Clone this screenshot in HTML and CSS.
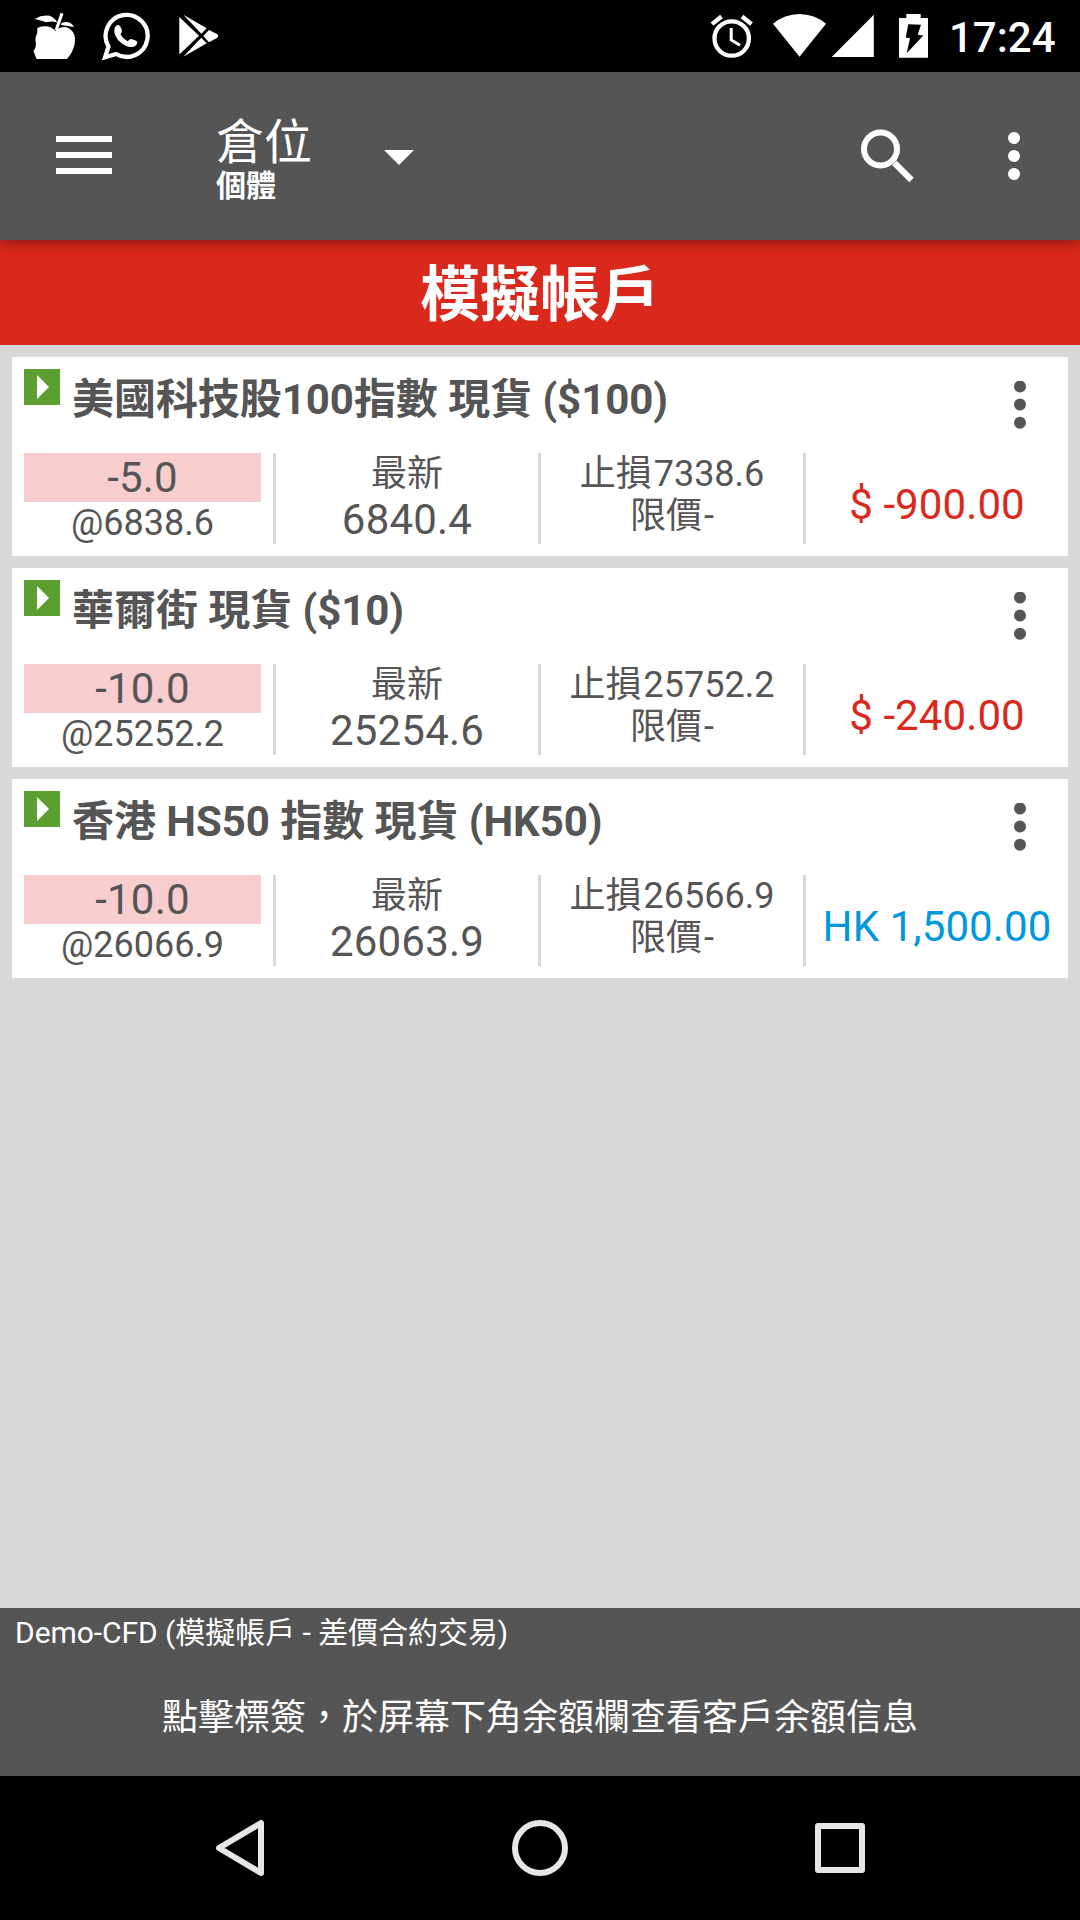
FILE: index.html
```html
<!DOCTYPE html>
<html lang="zh-Hant">
	<head>
		<meta charset="utf-8">
		<title>倉位</title>
		<link rel="stylesheet" href="styles.css">
	</head>
	<body>
		<div class="status">
			<svg width="48" height="48" viewBox="0 0 48 48" fill="#fff">
				<path d="M7.300 16Q11 14 15 14.300Q22 14.500 25.300 19Q29 15 35 15C41 16 45 21 45 27C45 35 42 41 37 47H6.500L3.500 39Q6 36 6 32Q5 28 5.700 25Q8 21 7.300 16Z"/>
				<path d="M4.700 7Q12 2.500 19.700 3.800Q25 6 27.300 10.500Q22 8.500 16.300 10.300Q11 8.500 4.700 7ZM30.500 .7L33.500 2L27.500 19L24.700 17.700ZM31.500 11Q40 8 44 15Q38 14 31 13Z"/>
			</svg>
			<svg width="48" height="48" viewBox="0 0 48 48">
				<path d="M3 45.300L6.500 34.500A21 21 0 1 1 14 42Z" fill="none" stroke="#fff" stroke-width="4.300"/>
				<path d="M12.300 18Q13 13 16.500 13Q18.500 13.500 20 18.500Q20 20 18.500 22.300Q20.500 26.500 25.500 29.300L28.500 27Q34 28 35.500 30Q35 34 31 35Q24 36 16.500 28.500Q12 23 12.300 18Z" fill="#fff"/>
			</svg>
			<svg width="48" height="48" viewBox="0 0 48 48" fill="#fff">
				<path d="M5.300 5V42.500L25 23.700ZM9.300 2.700L32.700 16.300L27.300 21.700ZM9.300 44.700L32.700 31.300L27.300 25.700ZM35 18L42.500 21.800Q46 23.800 42.500 26.200L35 30.300L29.300 24Z"/>
			</svg>
			<svg class="alarm" width="48" height="48" viewBox="0 0 48 48" fill="none" stroke="#fff">
				<circle cx="23.700" cy="26.500" r="17.200" stroke-width="4.300"/>
				<path d="M4 12.200L13.500 4.500M34 4.500L43.500 12.200" stroke-width="4.300"/>
				<path d="M23.200 16V28L32 33.300" stroke-width="3"/>
			</svg>
			<svg class="wifi" width="54" height="48" viewBox="0 0 54 48" fill="#fff">
				<path d="M0 11.700A41 41 0 0 1 53 11.700L26.500 44.700Z"/>
			</svg>
			<svg class="signal" width="43" height="48" viewBox="0 0 43 48" fill="#fff">
				<path d="M.7 44.900L42.800 2.700V44.900Z"/>
			</svg>
			<svg class="battery" width="29" height="48" viewBox="0 0 29 48" fill="#fff">
				<path fill-rule="evenodd" d="M0 6H7.300V2H21.700V6H29V45.700H0ZM9.300 12.300L22 12.700L18.700 22.700L24.300 23.500L7.700 41.300L11 26.300L6.700 25.500Z"/>
			</svg>
			<span class="time">17:24</span>
		</div>

		<div class="toolbar">
			<svg class="menu" width="56" height="38" viewBox="0 0 56 38" fill="#fff">
				<path d="M0 0H56V6H0ZM0 16H56V22H0ZM0 32H56V38H0Z"/>
			</svg>
			<div class="heading">
				<h1>倉位</h1>
				<h2>個體</h2>
			</div>
			<span class="caret"></span>
			<svg class="search" width="54" height="54" viewBox="0 0 54 54" fill="none" stroke="#fff" stroke-width="6">
				<circle cx="20.500" cy="20" r="16.500"/>
				<path d="M34.500 34L51.500 51" stroke-width="6.200"/>
				<path d="M34.200 36.500L36.500 34.200" stroke-width="3"/>
			</svg>
			<svg class="more" width="12" height="48" viewBox="0 0 12 48" fill="#fff">
				<circle cx="6" cy="6" r="6"/><circle cx="6" cy="24" r="6"/><circle cx="6" cy="42" r="6"/>
			</svg>
		</div>

		<div class="banner">模擬帳戶</div>

		<div class="list">
			<div class="card">
				<div class="top">
					<svg width="36" height="36" viewBox="0 0 36 36"><path fill="#5d9e31" d="M0 0H36V36H0Z"/><path fill="#fff" d="M13 6L25 18L13 30Z"/></svg>
					<h3>美國科技股100指數 現貨 ($100)</h3>
					<svg class="dots" width="12" height="49" viewBox="0 0 12 49"><circle cx="6" cy="5.500" r="6"/><circle cx="6" cy="23.600" r="6"/><circle cx="6" cy="41.800" r="6"/></svg>
				</div>
				<div class="cols">
					<div class="amount"><b>-5.0</b><i>@6838.6</i></div>
					<div class="last"><i>最新</i><b>6840.4</b></div>
					<div class="limit"><i>止損<span>7338.6</span></i><i>限價<span>-</span></i></div>
					<div class="profit red">$ -900.00</div>
				</div>
			</div>
			<div class="card">
				<div class="top">
					<svg width="36" height="36" viewBox="0 0 36 36"><path fill="#5d9e31" d="M0 0H36V36H0Z"/><path fill="#fff" d="M13 6L25 18L13 30Z"/></svg>
					<h3>華爾街 現貨 ($10)</h3>
					<svg class="dots" width="12" height="49" viewBox="0 0 12 49"><circle cx="6" cy="5.500" r="6"/><circle cx="6" cy="23.600" r="6"/><circle cx="6" cy="41.800" r="6"/></svg>
				</div>
				<div class="cols">
					<div class="amount"><b>-10.0</b><i>@25252.2</i></div>
					<div class="last"><i>最新</i><b>25254.6</b></div>
					<div class="limit"><i>止損<span>25752.2</span></i><i>限價<span>-</span></i></div>
					<div class="profit red">$ -240.00</div>
				</div>
			</div>
			<div class="card">
				<div class="top">
					<svg width="36" height="36" viewBox="0 0 36 36"><path fill="#5d9e31" d="M0 0H36V36H0Z"/><path fill="#fff" d="M13 6L25 18L13 30Z"/></svg>
					<h3>香港 HS50 指數 現貨 (HK50)</h3>
					<svg class="dots" width="12" height="49" viewBox="0 0 12 49"><circle cx="6" cy="5.500" r="6"/><circle cx="6" cy="23.600" r="6"/><circle cx="6" cy="41.800" r="6"/></svg>
				</div>
				<div class="cols">
					<div class="amount"><b>-10.0</b><i>@26066.9</i></div>
					<div class="last"><i>最新</i><b>26063.9</b></div>
					<div class="limit"><i>止損<span>26566.9</span></i><i>限價<span>-</span></i></div>
					<div class="profit blue">HK 1,500.00</div>
				</div>
			</div>
		</div>

		<div class="account">
			<p class="name">Demo-CFD (模擬帳戶 - 差價合約交易)</p>
			<p class="tip">點擊標簽，於屏幕下角余額欄查看客戶余額信息</p>
		</div>

		<div class="nav">
			<svg width="60" height="60" viewBox="0 0 60 60"><path d="M9 30L51 5V55Z"/></svg>
			<svg width="60" height="60" viewBox="0 0 60 60"><circle cx="30" cy="30" r="25"/></svg>
			<svg width="60" height="60" viewBox="0 0 60 60"><path d="M8 8H52V52H8Z"/></svg>
		</div>
	</body>
</html>
```
FILE: styles.css
```css
*{
	padding: 0;
	margin: 0;
	box-sizing: border-box;
}
body{
	width: 1080px;
	height: 1920px;
	display: flex;
	flex-direction: column;
	overflow: hidden;
	background: #d8d8d8;
	color: #555;
	font-family: Roboto, "Noto Sans CJK TC", sans-serif;
}
svg{
	display: block;
	flex: none;
}
.status{
	height: 72px;
	padding: 12px 24px 0 30px;
	display: flex;
	gap: 24px;
	background: #000;
	color: #fff;
}
.status .alarm{
	margin-left: 462px;
}
.status .wifi{
	margin-left: -7px;
}
.status .signal{
	margin-left: -20px;
}
.status .battery{
	margin-left: 1px;
}
.time{
	margin-left: -3px;
	font-size: 42px;
	font-weight: 500;
	line-height: 51px;
}
.toolbar{
	height: 168px;
	padding: 0 60px 0 56px;
	display: flex;
	align-items: center;
	position: relative;
	background: #555;
	color: #fff;
	box-shadow: 0 2px 14px rgba(0,0,0,0.4);
}
.menu{
	margin-top: -2px;
}
.heading{
	width: 168px;
	margin-left: 104px;
	padding-top: 3px;
}
.heading h1{
	font-size: 48px;
	font-weight: 400;
	line-height: 56px;
}
.heading h2{
	font-size: 30px;
	font-weight: 700;
	line-height: 30px;
}
.caret{
	margin-top: 3px;
	border: 15px solid transparent;
	border-top-color: #fff;
	border-bottom: 0;
}
.search{
	margin-left: 446px;
}
.more{
	margin-left: 94px;
}
.banner{
	height: 105px;
	background: #da281c;
	color: #fff;
	font-size: 60px;
	font-weight: 700;
	line-height: 111px;
	text-align: center;
}
.list{
	flex: 1;
	padding: 12px;
	display: flex;
	flex-direction: column;
	gap: 12px;
}
.card{
	height: 199px;
	padding-top: 12px;
	background: #fff;
}
.top{
	height: 84px;
	padding: 0 42px 0 12px;
	display: flex;
	gap: 12px;
}
.top h3{
	flex: 1;
	font-size: 42px;
	font-weight: 700;
	line-height: 62px;
	letter-spacing: -0.05px;
}
.dots{
	margin-top: 12px;
	fill: #555;
}
.cols{
	height: 91px;
	display: grid;
	grid-template-columns: 261px 262px 262px 1fr;
	column-gap: 3px;
	text-align: center;
}
.cols > div{
	position: relative;
}
/* divider on the left of every column but the first */
.cols > div + div:before{
	content: '';
	position: absolute;
	left: -3px;
	top: 0;
	width: 3px;
	height: 91px;
	background: #d8d8d8;
}
.cols b,.cols i{
	display: block;
	font-style: normal;
	font-weight: 400;
}
.cols b{
	font-size: 42px;
	line-height: 49px;
	letter-spacing: 0.2px;
}
.cols i{
	font-size: 36px;
	line-height: 42px;
}
.amount b{
	margin: 0 12px;
	background: #f8cdce;
}
.limit span{
	margin-left: 2px;
}
.profit{
	font-size: 42px;
	line-height: 103px;
	letter-spacing: 0.1px;
}
.red{
	color: #da281c;
}
.blue{
	color: #0097db;
}
.account{
	height: 168px;
	background: #555;
	color: #fff;
}
.name{
	padding-left: 15px;
	font-size: 30px;
	line-height: 50px;
	letter-spacing: -0.05px;
}
.tip{
	font-size: 36px;
	line-height: 120px;
	text-align: center;
}
.nav{
	height: 144px;
	display: flex;
	justify-content: center;
	align-items: center;
	gap: 240px;
	background: #000;
}
.nav svg{
	fill: none;
	stroke: #e6e6e6;
	stroke-width: 6;
	stroke-linejoin: round;
}
```
